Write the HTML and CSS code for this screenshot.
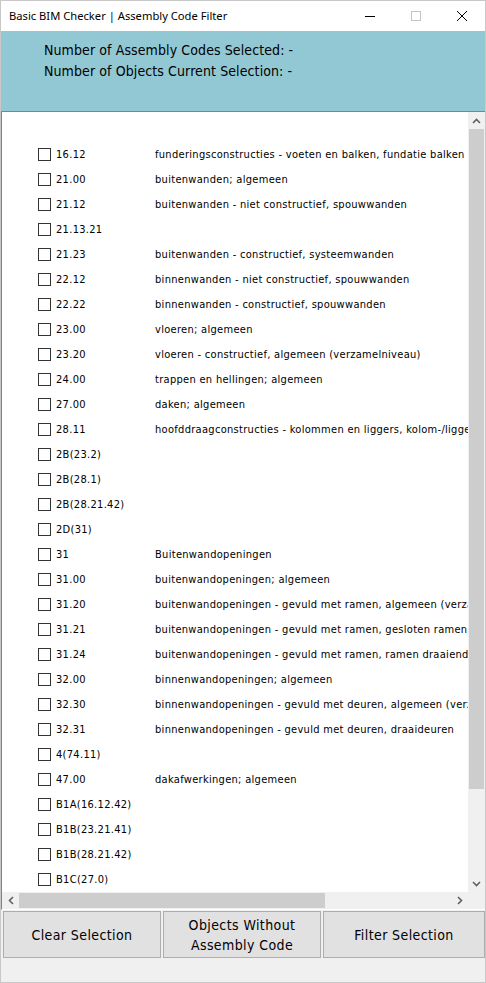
FILE: index.html
```html
<!DOCTYPE html>
<html>
<head>
<meta charset="utf-8">
<link rel="stylesheet" href="styles.css">
</head>
<body>
<div class="window">
  <div class="titlebar">
    <span class="title">Basic BIM Checker | Assembly Code Filter</span>
    <div class="controls">
      <span class="ctl"><svg width="12" height="12" viewBox="0 0 12 12"><path d="M1 6.5H11" stroke="#000" stroke-width="1"/></svg></span>
      <span class="ctl"><svg width="12" height="12" viewBox="0 0 12 12"><rect x="1.5" y="1.5" width="9" height="9" fill="none" stroke="#c4c4c4" stroke-width="1"/></svg></span>
      <span class="ctl"><svg width="12" height="12" viewBox="0 0 12 12"><path d="M1 1L11 11M11 1L1 11" stroke="#000" stroke-width="1"/></svg></span>
    </div>
  </div>
  <div class="header">
    <div class="hline">Number of Assembly Codes Selected: -</div>
    <div class="hline">Number of Objects Current Selection: -</div>
  </div>
  <div class="listbox">
    <div class="listmain">
      <div class="content">
        <div class="rows">
          <div class="row"><span class="cb"></span><span class="code">16.12</span><span class="desc">funderingsconstructies - voeten en balken, fundatie balken</span></div>
          <div class="row"><span class="cb"></span><span class="code">21.00</span><span class="desc">buitenwanden; algemeen</span></div>
          <div class="row"><span class="cb"></span><span class="code">21.12</span><span class="desc">buitenwanden - niet constructief, spouwwanden</span></div>
          <div class="row"><span class="cb"></span><span class="code">21.13.21</span><span class="desc"></span></div>
          <div class="row"><span class="cb"></span><span class="code">21.23</span><span class="desc">buitenwanden - constructief, systeemwanden</span></div>
          <div class="row"><span class="cb"></span><span class="code">22.12</span><span class="desc">binnenwanden - niet constructief, spouwwanden</span></div>
          <div class="row"><span class="cb"></span><span class="code">22.22</span><span class="desc">binnenwanden - constructief, spouwwanden</span></div>
          <div class="row"><span class="cb"></span><span class="code">23.00</span><span class="desc">vloeren; algemeen</span></div>
          <div class="row"><span class="cb"></span><span class="code">23.20</span><span class="desc">vloeren - constructief, algemeen (verzamelniveau)</span></div>
          <div class="row"><span class="cb"></span><span class="code">24.00</span><span class="desc">trappen en hellingen; algemeen</span></div>
          <div class="row"><span class="cb"></span><span class="code">27.00</span><span class="desc">daken; algemeen</span></div>
          <div class="row"><span class="cb"></span><span class="code">28.11</span><span class="desc">hoofddraagconstructies - kolommen en liggers, kolom-/liggerconstructies</span></div>
          <div class="row"><span class="cb"></span><span class="code">2B(23.2)</span><span class="desc"></span></div>
          <div class="row"><span class="cb"></span><span class="code">2B(28.1)</span><span class="desc"></span></div>
          <div class="row"><span class="cb"></span><span class="code">2B(28.21.42)</span><span class="desc"></span></div>
          <div class="row"><span class="cb"></span><span class="code">2D(31)</span><span class="desc"></span></div>
          <div class="row"><span class="cb"></span><span class="code">31</span><span class="desc">Buitenwandopeningen</span></div>
          <div class="row"><span class="cb"></span><span class="code">31.00</span><span class="desc">buitenwandopeningen; algemeen</span></div>
          <div class="row"><span class="cb"></span><span class="code">31.20</span><span class="desc">buitenwandopeningen - gevuld met ramen, algemeen (verzamelniveau)</span></div>
          <div class="row"><span class="cb"></span><span class="code">31.21</span><span class="desc">buitenwandopeningen - gevuld met ramen, gesloten ramen</span></div>
          <div class="row"><span class="cb"></span><span class="code">31.24</span><span class="desc">buitenwandopeningen - gevuld met ramen, ramen draaiend</span></div>
          <div class="row"><span class="cb"></span><span class="code">32.00</span><span class="desc">binnenwandopeningen; algemeen</span></div>
          <div class="row"><span class="cb"></span><span class="code">32.30</span><span class="desc">binnenwandopeningen - gevuld met deuren, algemeen (verzamelniveau)</span></div>
          <div class="row"><span class="cb"></span><span class="code">32.31</span><span class="desc">binnenwandopeningen - gevuld met deuren, draaideuren</span></div>
          <div class="row"><span class="cb"></span><span class="code">4(74.11)</span><span class="desc"></span></div>
          <div class="row"><span class="cb"></span><span class="code">47.00</span><span class="desc">dakafwerkingen; algemeen</span></div>
          <div class="row"><span class="cb"></span><span class="code">B1A(16.12.42)</span><span class="desc"></span></div>
          <div class="row"><span class="cb"></span><span class="code">B1B(23.21.41)</span><span class="desc"></span></div>
          <div class="row"><span class="cb"></span><span class="code">B1B(28.21.42)</span><span class="desc"></span></div>
          <div class="row"><span class="cb"></span><span class="code">B1C(27.0)</span><span class="desc"></span></div>
        </div>
      </div>
      <div class="vscroll">
        <span class="arrow"><svg width="9" height="6" viewBox="0 0 9 6"><path d="M1 5L4.5 1.5L8 5" fill="none" stroke="#606060" stroke-width="1.6"/></svg></span>
        <div class="vtrack"><div class="vthumb"></div></div>
        <span class="arrow"><svg width="9" height="6" viewBox="0 0 9 6"><path d="M1 1L4.5 4.5L8 1" fill="none" stroke="#606060" stroke-width="1.6"/></svg></span>
      </div>
    </div>
    <div class="hbar">
      <div class="hscroll">
        <span class="harrow"><svg width="6" height="9" viewBox="0 0 6 9"><path d="M5 1L1.5 4.5L5 8" fill="none" stroke="#606060" stroke-width="1.6"/></svg></span>
        <div class="htrack"><div class="hthumb"></div></div>
        <span class="harrow"><svg width="6" height="9" viewBox="0 0 6 9"><path d="M1 1L4.5 4.5L1 8" fill="none" stroke="#606060" stroke-width="1.6"/></svg></span>
      </div>
      <div class="corner"></div>
    </div>
  </div>
  <div class="buttons">
    <div class="btn">Clear Selection</div>
    <div class="btn">Objects Without<br>Assembly Code</div>
    <div class="btn">Filter Selection</div>
  </div>
</div>
</body>
</html>
```
FILE: styles.css
```css
html, body {
  margin: 0;
  padding: 0;
}
body {
  width: 486px;
  height: 983px;
  background: #f0f0f0;
  overflow: hidden;
}
.window {
  box-sizing: border-box;
  width: 486px;
  height: 983px;
  border: 1px solid #c8c8c8;
  display: flex;
  flex-direction: column;
  background: #f0f0f0;
}
.titlebar {
  height: 30px;
  background: #fff;
  display: flex;
  align-items: center;
  justify-content: space-between;
  flex: none;
}
.title {
  font-family: "Noto Sans", sans-serif;
  font-size: 11.2px;
  color: #000;
  padding-left: 8px;
  padding-bottom: 1px;
}
.controls {
  display: flex;
}
.ctl {
  width: 46px;
  height: 30px;
  display: flex;
  align-items: center;
  justify-content: center;
}
.header {
  height: 80px;
  background: #92c8d4;
  flex: none;
  padding: 9px 0 0 43px;
  box-sizing: border-box;
  font-family: "DejaVu Sans Condensed", "DejaVu Sans", sans-serif;
  font-size: 14px;
  letter-spacing: 0.1px;
  color: #000;
}
.hline {
  height: 21px;
  line-height: 21px;
}
.listbox {
  flex: none;
  height: 799px;
  box-sizing: border-box;
  border-top: 1px solid #828282;
  border-left: 1px solid #828282;
  border-bottom: 1px solid #fff;
  display: flex;
  flex-direction: column;
  background: #fff;
}
.listmain {
  flex: 1;
  display: flex;
  min-height: 0;
}
.content {
  flex: 1;
  overflow: hidden;
  background: #fff;
}
.rows {
  padding: 30px 0 0 36px;
  font-family: "DejaVu Sans Condensed", "DejaVu Sans", sans-serif;
  font-size: 11px;
  letter-spacing: 0.3px;
  color: #000;
}
.row {
  height: 25px;
  display: flex;
  align-items: center;
  white-space: nowrap;
}
.cb {
  width: 13px;
  height: 13px;
  box-sizing: border-box;
  border: 1px solid #333;
  background: #fff;
  flex: none;
  margin-right: 5px;
}
.code {
  width: 99px;
  flex: none;
}
.desc {
  flex: none;
}
.vscroll {
  width: 17px;
  flex: none;
  background: #f0f0f0;
  display: flex;
  flex-direction: column;
}
.arrow {
  height: 17px;
  display: flex;
  align-items: center;
  justify-content: center;
  flex: none;
}
.vtrack {
  flex: 1;
  padding: 0 1px;
}
.vthumb {
  height: 660px;
  background: #cdcdcd;
}
.hbar {
  height: 17px;
  flex: none;
  display: flex;
}
.hscroll {
  flex: 1;
  display: flex;
  background: #f0f0f0;
}
.harrow {
  width: 17px;
  display: flex;
  align-items: center;
  justify-content: center;
  flex: none;
}
.htrack {
  flex: 1;
  padding: 1px 0;
}
.hthumb {
  width: 306px;
  height: 100%;
  background: #cdcdcd;
}
.corner {
  width: 17px;
  background: #f0f0f0;
}
.buttons {
  display: flex;
  gap: 2px;
  padding: 1px 0 0 2px;
}
.btn {
  height: 47px;
  box-sizing: border-box;
  border: 1px solid #adadad;
  background: #e1e1e1;
  display: flex;
  align-items: center;
  justify-content: center;
  text-align: center;
  font-family: "DejaVu Sans Condensed", "DejaVu Sans", sans-serif;
  font-size: 14px;
  letter-spacing: 0.4px;
  line-height: 20px;
  color: #000;
}
.btn:nth-child(1) { width: 158px; }
.btn:nth-child(2) { width: 158px; }
.btn:nth-child(3) { width: 162px; }
```
